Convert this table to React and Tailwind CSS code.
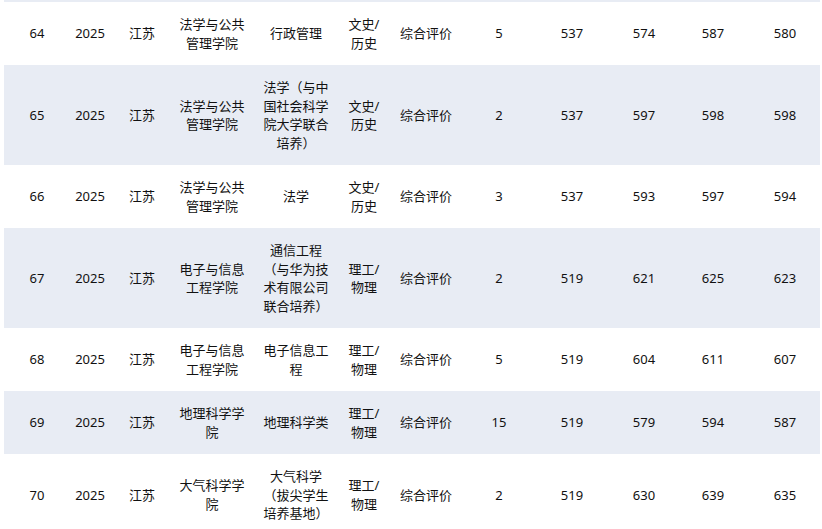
import React from 'react';

const rows = [
    { no: 64, year: 2025, prov: '江苏', college: '法学与公共管理学院', major: '行政管理', subject: '文史/历史', type: '综合评价', plan: 5, line: 537, min: 574, max: 587, avg: 580 },
    { no: 65, year: 2025, prov: '江苏', college: '法学与公共管理学院', major: '法学（与中国社会科学院大学联合培养）', subject: '文史/历史', type: '综合评价', plan: 2, line: 537, min: 597, max: 598, avg: 598 },
    { no: 66, year: 2025, prov: '江苏', college: '法学与公共管理学院', major: '法学', subject: '文史/历史', type: '综合评价', plan: 3, line: 537, min: 593, max: 597, avg: 594 },
    { no: 67, year: 2025, prov: '江苏', college: '电子与信息工程学院', major: '通信工程（与华为技术有限公司联合培养）', subject: '理工/物理', type: '综合评价', plan: 2, line: 519, min: 621, max: 625, avg: 623 },
    { no: 68, year: 2025, prov: '江苏', college: '电子与信息工程学院', major: '电子信息工程', subject: '理工/物理', type: '综合评价', plan: 5, line: 519, min: 604, max: 611, avg: 607 },
    { no: 69, year: 2025, prov: '江苏', college: '地理科学学院', major: '地理科学类', subject: '理工/物理', type: '综合评价', plan: 15, line: 519, min: 579, max: 594, avg: 587 },
    { no: 70, year: 2025, prov: '江苏', college: '大气科学学院', major: '大气科学（拔尖学生培养基地）', subject: '理工/物理', type: '综合评价', plan: 2, line: 519, min: 630, max: 639, avg: 635 },
];

export default function App() {
    const cell = 'py-[13px] px-[4px] text-center align-middle';

    return (
        <div className="bg-white min-h-screen pl-[4px] overflow-hidden" style={{ fontFamily: '"Noto Sans", "Noto Sans CJK SC", sans-serif' }}>
            <table className="w-[816px] table-fixed border-collapse text-[13px] leading-[18.5px] text-[#111]">
                <colgroup>
                    <col className="w-[66px]" />
                    <col className="w-[40px]" />
                    <col className="w-[64px]" />
                    <col className="w-[76px]" />
                    <col className="w-[92px]" />
                    <col className="w-[44px]" />
                    <col className="w-[80px]" />
                    <col className="w-[66px]" />
                    <col className="w-[80px]" />
                    <col className="w-[64px]" />
                    <col className="w-[74px]" />
                    <col className="w-[70px]" />
                </colgroup>
                <tbody>
                    {/* tail of previous row */}
                    <tr className="h-[2px] bg-[#e8ecf4]">
                        <td colSpan={12} className="p-0"></td>
                    </tr>
                    {rows.map((r, i) => (
                        <tr key={r.no} className={i % 2 === 1 ? 'bg-[#e8ecf4]' : 'bg-white'}>
                            <td className={cell}>{r.no}</td>
                            <td className={cell}>{r.year}</td>
                            <td className={cell}>{r.prov}</td>
                            <td className={cell}>{r.college}</td>
                            <td className="py-[13px] px-[8px] text-center align-middle">{r.major}</td>
                            <td className={cell}>{r.subject}</td>
                            <td className={cell}>{r.type}</td>
                            <td className={cell}>{r.plan}</td>
                            <td className={cell}>{r.line}</td>
                            <td className={cell}>{r.min}</td>
                            <td className={cell}>{r.max}</td>
                            <td className={cell}>{r.avg}</td>
                        </tr>
                    ))}
                </tbody>
            </table>
        </div>
    );
}
